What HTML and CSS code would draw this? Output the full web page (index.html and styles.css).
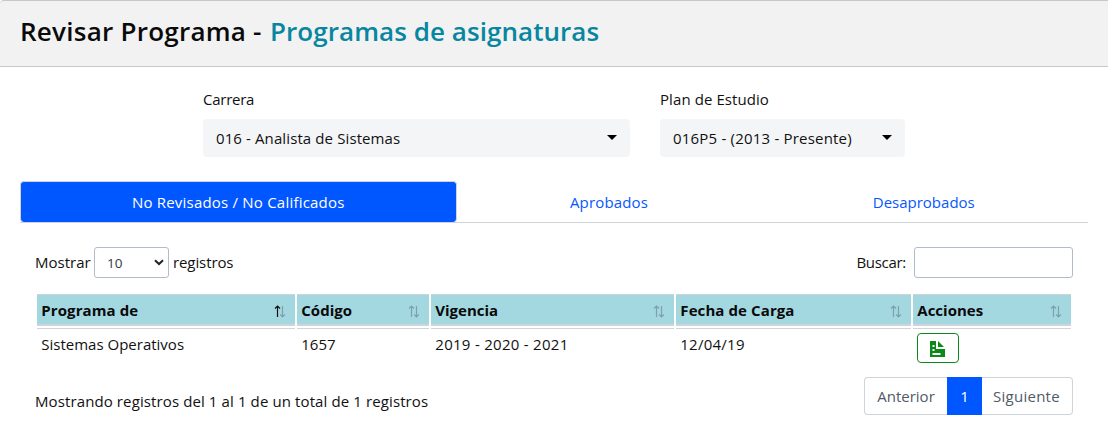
FILE: index.html
```html
<!DOCTYPE html>
<html lang="es">
<head>
<meta charset="utf-8">
<title>Revisar Programa</title>
<link rel="stylesheet" href="styles.css">
</head>
<body>
<header class="card-header">
  <h1 class="title"><span class="title-main">Revisar Programa -</span><span class="title-sub">Programas de asignaturas</span></h1>
</header>
<main class="card-body">
  <section class="filters">
    <div class="field field-career">
      <span class="label t-carrera">Carrera</span>
      <div class="picker"><span class="t-analista">016 - Analista de Sistemas</span><i class="caret"></i></div>
    </div>
    <div class="field field-plan">
      <span class="label t-plan">Plan de Estudio</span>
      <div class="picker"><span class="t-periodo">016P5 - (2013 - Presente)</span><i class="caret"></i></div>
    </div>
  </section>
  <nav class="tabs">
    <a class="tab tab-first active"><span class="t-norev">No Revisados / No Calificados</span></a>
    <a class="tab tab-second"><span class="t-aprob">Aprobados</span></a>
    <a class="tab tab-third"><span class="t-desap">Desaprobados</span></a>
  </nav>
  <section class="panel">
    <div class="toolbar">
      <div class="length">
        <span class="t-mostrar">Mostrar</span>
        <div class="length-select"><span>10</span>
          <svg width="10" height="7" viewBox="0 0 10 7"><path d="M1 1.2 5 5 9 1.2" fill="none" stroke="#212529" stroke-width="2"/></svg>
        </div>
        <span class="t-registros">registros</span>
      </div>
      <div class="search"><span class="t-buscar">Buscar:</span><input class="search-input" type="text" aria-label="Buscar"></div>
    </div>
    <table class="grid">
      <colgroup><col class="c1"><col class="c2"><col class="c3"><col class="c4"><col class="c5"></colgroup>
      <thead>
        <tr>
          <th><div class="head"><span class="h-programa">Programa de</span><svg class="sort" width="12" height="13" viewBox="0 0 12 13"><path class="on" d="M3.5 12V1.5M1 3.5 3.5 1 6 3.5"/><path class="off" d="M8.500 1v10.500M6.200 9.500l2.300 2.300 2.300-2.300"/></svg></div></th>
          <th><div class="head"><span class="h-codigo">Código</span><svg class="sort" width="12" height="13" viewBox="0 0 12 13"><path class="off" d="M3.5 12V1.5M1 3.5 3.5 1 6 3.5"/><path class="off" d="M8.500 1v10.500M6.200 9.500l2.300 2.300 2.300-2.300"/></svg></div></th>
          <th><div class="head"><span class="h-vigencia">Vigencia</span><svg class="sort" width="12" height="13" viewBox="0 0 12 13"><path class="off" d="M3.5 12V1.5M1 3.5 3.5 1 6 3.5"/><path class="off" d="M8.500 1v10.500M6.200 9.500l2.300 2.300 2.300-2.300"/></svg></div></th>
          <th><div class="head"><span class="h-fecha">Fecha de Carga</span><svg class="sort" width="12" height="13" viewBox="0 0 12 13"><path class="off" d="M3.5 12V1.5M1 3.5 3.5 1 6 3.5"/><path class="off" d="M8.500 1v10.500M6.200 9.500l2.300 2.300 2.300-2.300"/></svg></div></th>
          <th><div class="head"><span class="h-acciones">Acciones</span><svg class="sort" width="12" height="13" viewBox="0 0 12 13"><path class="off" d="M3.5 12V1.5M1 3.5 3.5 1 6 3.5"/><path class="off" d="M8.500 1v10.500M6.200 9.500l2.300 2.300 2.300-2.300"/></svg></div></th>
        </tr>
      </thead>
      <tbody>
        <tr>
          <td><span class="d-sistemas">Sistemas Operativos</span></td>
          <td><span class="d-codigo">1657</span></td>
          <td><span class="d-vigencia">2019 - 2020 - 2021</span></td>
          <td><span class="d-fecha">12/04/19</span></td>
          <td><button class="action" aria-label="Ver programa"><svg width="15" height="16" viewBox="0 0 15 16"><path d="M0 0h6v8h9v8H0zM2.500 4v2h2V4zM2.500 8v2h2V8zM2.500 12v2h8v-2z" fill="#0b8a1a" fill-rule="evenodd"/><path d="M8 0 14 6H8z" fill="#0b8a1a"/></svg></button></td>
        </tr>
      </tbody>
    </table>
    <div class="footer">
      <span class="info">Mostrando registros del 1 al 1 de un total de 1 registros</span>
      <div class="pagination">
        <a class="page prev"><span class="t-anterior">Anterior</span></a><a class="page current"><span>1</span></a><a class="page next"><span class="t-siguiente">Siguiente</span></a>
      </div>
    </div>
  </section>
</main>
</body>
</html>
```
FILE: styles.css
```css
* { box-sizing: border-box; }
body {
  margin: 0;
  background: #fff;
  color: #111;
  font: 15px/24px "Open Sans", "Noto Sans", sans-serif;
  white-space: nowrap;
  overflow: hidden;
}
.card-header {
  height: 67px;
  padding: 13px 20px 0;
  background: #f2f2f2;
  border-top: 1px solid #c8c8c8;
  border-bottom: 1px solid #c8c8c8;
  border-top-left-radius: 4px;
}
.title { display: flex; margin: 0; font-size: 26px; line-height: 34px; font-weight: 600; color: #0a0a0a; }
.title-main { width: 250px; letter-spacing: .25px; }
.title-sub { color: #0686a0; letter-spacing: .06px; }
.card-body { padding: 20px 20px 0; }
.filters { display: flex; gap: 30px; padding-left: 183px; }
.field-career { width: 427px; }
.field-plan { width: 245px; }
.label { display: block; margin-bottom: 8px; }
.t-carrera { letter-spacing: -.25px; }
.t-plan { letter-spacing: .08px; }
.picker {
  display: flex;
  align-items: center;
  justify-content: space-between;
  height: 38px;
  padding: 0 13px;
  background: #f4f5f7;
  border-radius: 4px;
}
.t-analista { letter-spacing: .11px; }
.t-periodo { letter-spacing: .2px; }
.caret { border: 5px solid transparent; border-top-color: #000; border-bottom: 0; margin-bottom: 2px; }
.tabs { display: flex; height: 42px; margin-top: 24px; border-bottom: 1px solid #ced4da; }
.tab { display: flex; align-items: center; justify-content: center; color: #0757ff; }
.tab-first { width: 436.500px; }
.tab-second { width: 305px; }
.tab-third { width: 324.500px; }
.tab.active { background: #0056ff; color: #fff; border: 1px solid #ced4da; border-bottom: 0; border-radius: 4px; }
.t-norev { letter-spacing: .21px; }
.t-aprob { letter-spacing: .15px; }
.panel { padding: 24px 15px 0; }
.toolbar { display: flex; justify-content: space-between; height: 31px; align-items: center; }
.length { display: flex; align-items: center; }
.t-mostrar { width: 59px; }
.t-mostrar, .t-registros, .t-buscar { padding-bottom: 2px; }
.t-registros { letter-spacing: -.1px; }
.t-buscar { letter-spacing: -.3px; }
.length-select {
  display: flex;
  align-items: center;
  justify-content: space-between;
  width: 75px;
  height: 31px;
  margin-right: 4px;
  padding: 0 4px 0 12px;
  border: 1px solid #b1bbc9;
  border-radius: 3px;
  font-size: 13.500px;
  color: #333a42;
}
.search { display: flex; align-items: center; gap: 8px; }
.search-input { width: 159px; height: 31px; border: 1px solid #b1bbc9; border-radius: 3px; background: #fff; }
.grid { width: 1038px; margin-top: 14px; border-collapse: separate; border-spacing: 2px; table-layout: fixed; }
.c1 { width: 258px; }
.c2 { width: 132px; }
.c3 { width: 243px; }
.c4 { width: 235px; }
.c5 { width: 158px; }
th {
  height: 32px;
  padding: 0 9px 0 4.300px;
  background: #a4d8e1;
  border-top: 1px solid #ced4da;
  border-bottom: 2px solid #ced4da;
  text-align: left;
  font-weight: 700;
  color: #0a0a0a;
}
.head { display: flex; justify-content: space-between; align-items: center; height: 29px; }
.h-programa, .h-fecha { letter-spacing: .1px; }
.sort { fill: none; stroke-width: 1.200; margin-top: 3px; }
.sort .on { stroke: #111; }
.sort .off { stroke: #7da0a9; }
td { height: 40px; padding: 3px 4px 0 4.300px; vertical-align: top; border-top: 1px solid #ced4da; }
.d-vigencia { letter-spacing: .28px; }
.d-fecha { letter-spacing: .25px; }
.action {
  display: flex;
  align-items: center;
  justify-content: center;
  width: 42px;
  height: 30px;
  margin-top: 1px;
  padding: 2px 1px 0 0;
  background: #fff;
  border: 1px solid #0b8a1a;
  border-radius: 4px;
}
.footer { display: flex; justify-content: space-between; margin-top: 7px; }
.info { padding-top: 12px; letter-spacing: .11px; }
.pagination { display: flex; height: 38px; color: #4f5b67; }
.page { display: flex; align-items: center; justify-content: center; border: 1px solid #ced4da; }
.prev { width: 83px; border-right: 0; border-radius: 4px 0 0 4px; }
.current { width: 35px; background: #0056ff; border-color: #0056ff; color: #fff; }
.next { width: 91px; border-left: 0; border-radius: 0 4px 4px 0; }
.t-siguiente { letter-spacing: .25px; padding-right: 1px; }
```
